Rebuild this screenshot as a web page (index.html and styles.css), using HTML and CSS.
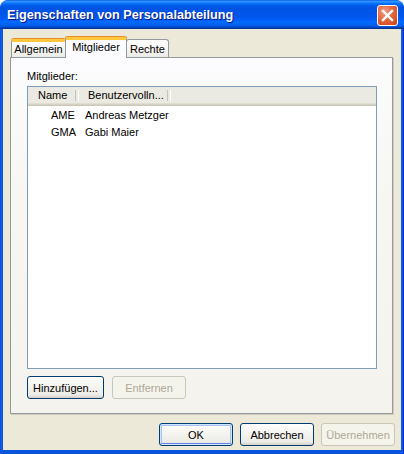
FILE: index.html
```html
<!DOCTYPE html>
<html lang="de">
<head>
<meta charset="utf-8">
<title>Eigenschaften von Personalabteilung</title>
<link rel="stylesheet" href="styles.css">
</head>
<body>
<div class="window">
  <div class="titlebar">
    <span class="title">Eigenschaften von Personalabteilung</span>
    <button class="close" aria-label="Schließen">
      <svg width="21" height="21" viewBox="0 0 21 21"><path d="M6 6 L15 15 M15 6 L6 15" stroke="#fff" stroke-width="2.4" stroke-linecap="square" fill="none"/></svg>
    </button>
  </div>
  <div class="client">
    <div class="tabcontrol">
      <div class="tabstrip">
        <div class="tab hot w1">Allgemein</div>
        <div class="tab selected w2">Mitglieder</div>
        <div class="tab w3">Rechte</div>
      </div>
      <div class="panel">
        <div class="label">Mitglieder:</div>
        <div class="listview">
          <div class="lv-header">
            <div class="hcol h1">Name</div>
            <div class="hcol h2">Benutzervolln...</div>
            <div class="hcol hfill"></div>
          </div>
          <div class="lv-row"><span class="c1">AME</span><span class="c2">Andreas Metzger</span></div>
          <div class="lv-row"><span class="c1">GMA</span><span class="c2">Gabi Maier</span></div>
        </div>
        <div class="panel-buttons">
          <button class="btn b-add">Hinzufügen...</button>
          <button class="btn b-remove" disabled>Entfernen</button>
        </div>
      </div>
    </div>
    <div class="dialog-buttons">
      <button class="btn default">OK</button>
      <button class="btn">Abbrechen</button>
      <button class="btn" disabled>Übernehmen</button>
    </div>
  </div>
</div>
</body>
</html>
```

FILE: styles.css
```css
* { box-sizing: border-box; }
html, body { margin: 0; padding: 0; background: #ffffff; }
body { font-family: "Liberation Sans", Arial, sans-serif; font-size: 11px; color: #000; }

.window {
  width: 404px;
  height: 454px;
  display: flex;
  flex-direction: column;
  border-radius: 8px 8px 0 0;
  overflow: hidden;
  background: linear-gradient(to right, #0831d9 0, #166aee 1px, #0855dd 2px, #0855dd 401px, #166aee 402px, #0831d9 403px);
}

.titlebar {
  height: 29px;
  flex: none;
  display: flex;
  align-items: center;
  padding: 0 6px 0 7px;
  background: linear-gradient(to bottom,
    #0058ee 0%, #3593ff 4%, #288eff 7%, #127dff 10%, #036ffc 13%,
    #0262ee 17%, #0057e5 22%, #0054e3 28%, #0055eb 56%, #005bf5 66%,
    #026afe 76%, #0062ef 86%, #0052d6 92%, #0040ab 96%, #003092 100%);
  border-radius: 8px 8px 0 0;
}
.title {
  flex: 1;
  color: #fff;
  font-family: "Liberation Sans", Arial, sans-serif;
  font-weight: bold;
  font-size: 12.7px;
  text-shadow: 1px 1px 0 #0a1883;
  padding-top: 1px;
  white-space: nowrap;
}
.close {
  width: 21px;
  height: 21px;
  padding: 0;
  border: 1px solid #fff;
  border-radius: 3px;
  background: radial-gradient(circle at 35% 30%, #f29f85 0%, #e5673f 45%, #c7401a 100%);
  display: flex;
  align-items: center;
  justify-content: center;
  margin-top: 2px;
}
.close svg { display: block; margin: -1px; }

.client {
  flex: 1;
  margin: 0 3px 4px 3px;
  background: #ece9d8;
  padding: 8px 0 0 7px;
  display: flex;
  flex-direction: column;
}

.tabcontrol { width: 383px; }
.tabstrip {
  height: 20px;
  display: flex;
  align-items: flex-end;
  padding-left: 1px;
  position: relative;
  z-index: 1;
}
.tab {
  height: 18px;
  border: 1px solid #919b9c;
  border-bottom: none;
  border-radius: 3px 3px 0 0;
  background: linear-gradient(to bottom, #ffffff, #f3f3ef 60%, #ecebe6);
  text-align: center;
  padding-top: 3px;
  line-height: 13px;
}
.tab.hot, .tab.selected {
  border-top: 3px solid #ffc83c;
  box-shadow: 0 -1px 0 #e68b2c;
  padding-top: 1px;
}
.tab.selected {
  height: 21px;
  margin-bottom: -1px;
  background: #fcfcfe;
  padding-top: 1px;
}
.w1 { width: 55px; }
.w2 { width: 62px; margin-left: -1px; }
.w3 { width: 43px; margin-left: -1px; }

.panel {
  height: 357px;
  border: 1px solid #919b9c;
  box-shadow: 1px 1px 0 #d0cdbf;
  background: linear-gradient(to bottom, #fcfcfe 0%, #f7f6f1 40%, #f4f3ee 100%);
  padding: 12px 0 0 16px;
  display: flex;
  flex-direction: column;
}
.label { line-height: 13px; height: 13px; color: #000; }

.listview {
  margin-top: 3px;
  width: 350px;
  height: 283px;
  border: 1px solid #7f9db9;
  background: #fff;
}
.lv-header {
  height: 19px;
  display: flex;
  background: #ebeae2;
  box-shadow: inset 0 -1px 0 #cbc7b8, inset 0 -2px 0 #d6d2c2, inset 0 -3px 0 #e2decd;
}
.hcol {
  height: 100%;
  line-height: 17px;
  white-space: nowrap;
  position: relative;
}
.h1 { width: 51px; padding-left: 10px; }
.h2 { width: 92px; padding-left: 9px; }
.h1::after, .h2::after {
  content: "";
  position: absolute;
  right: 0;
  top: 3px;
  bottom: 5px;
  width: 2px;
  border-left: 1px solid #c7c5b2;
  border-right: 1px solid #ffffff;
}
.hfill { flex: 1; }

.lv-row {
  height: 17px;
  line-height: 17px;
  display: flex;
  white-space: nowrap;
}
.lv-header + .lv-row { margin-top: 1px; }
.c1 { width: 57px; padding-left: 23px; }

.panel-buttons {
  display: flex;
  gap: 8px;
  margin-top: 7px;
}

.btn {
  height: 23px;
  font-family: "Liberation Sans", Arial, sans-serif;
  font-size: 11px;
  color: #000;
  border: 1px solid #003c74;
  border-radius: 3px;
  background: linear-gradient(to bottom, #ffffff 0%, #f5f5f1 40%, #ecebe6 85%, #d6d0c5 100%);
  padding: 0;
  width: 74px;
}
.btn:disabled {
  border-color: #c9c7ba;
  color: #aca899;
  background: #f5f4ea;
}
.b-add { width: 77px; }
.b-remove { width: 74px; }
.btn.default {
  box-shadow: inset 0 0 0 1px #cee7ff, inset 0 -2px 0 #6982ee, inset 0 0 0 2px #a9c4f4;
}

.dialog-buttons {
  display: flex;
  justify-content: flex-end;
  gap: 7px;
  margin-top: 9px;
  padding-right: 6px;
}
```
